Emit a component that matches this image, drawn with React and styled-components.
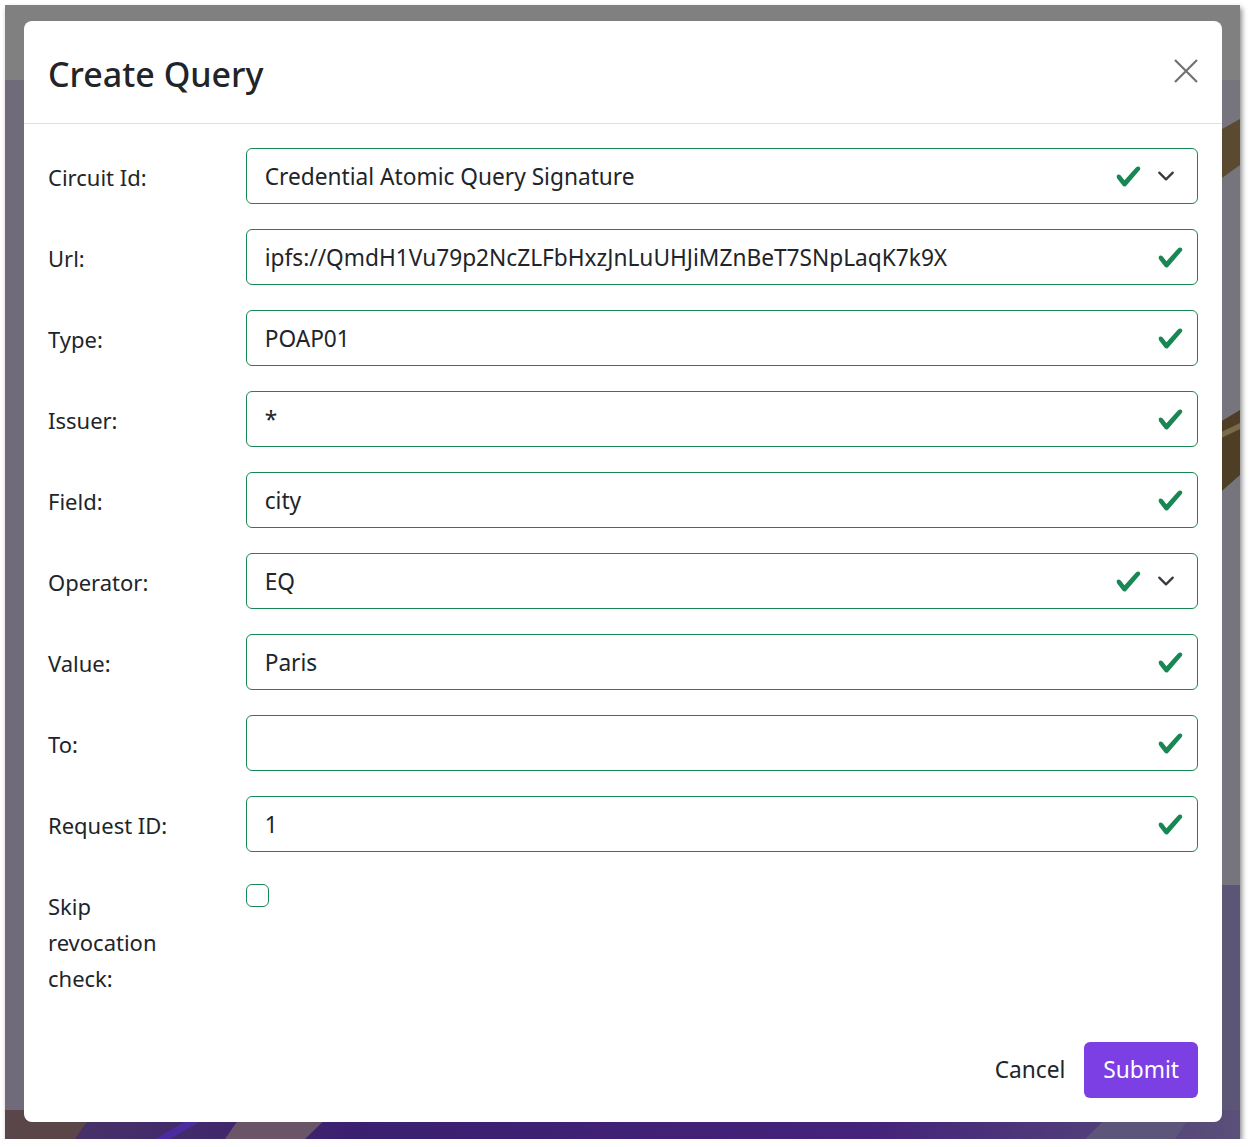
import React from 'react';
import styled, { createGlobalStyle } from 'styled-components';

const Global = createGlobalStyle`
  html, body { margin: 0; padding: 0; background: #fff; }
  body { font-family: "Noto Sans", "Open Sans", sans-serif; color: #212529; }
  *, *::before, *::after { box-sizing: border-box; }
`;

const Frame = styled.div`
  position: relative;
  margin: 5px 0 0 5px;
  width: 1235px;
  height: 1134px;
  box-shadow: 2px 3px 5px rgba(0, 0, 0, 0.45);
  overflow: hidden;
  padding: 16px 0 0 19px;
`;

const Backdrop = styled.svg`
  position: absolute;
  inset: 0;
  width: 100%;
  height: 100%;
  z-index: 0;
`;

const Modal = styled.div`
  position: relative;
  z-index: 1;
  width: 1198px;
  height: 1101px;
  background: #fff;
  border-radius: 8px;
  display: flex;
  flex-direction: column;
`;

const Header = styled.div`
  height: 103px;
  flex: none;
  border-bottom: 1px solid #dee2e6;
  display: flex;
  align-items: center;
  justify-content: space-between;
  padding: 4px 24px 0;
`;

const Title = styled.h5`
  margin: 0;
  font-size: 34px;
  font-weight: 500;
  line-height: 1.5;
  color: #212529;
`;

const CloseButton = styled.button`
  border: 0;
  background: transparent;
  padding: 0;
  margin-top: -6px;
  width: 24px;
  height: 24px;
  display: flex;
  opacity: 0.55;
  cursor: pointer;
`;

const Body = styled.div`
  flex: none;
  padding: 24px 24px 22px;
`;

const Row = styled.div`
  display: grid;
  grid-template-columns: 161.67px 952.33px;
  column-gap: 36px;
  margin-bottom: ${p => (p.$last ? '0' : '25px')};
`;

const Label = styled.label`
  font-size: 22px;
  line-height: 36px;
  padding-top: 11px;
  color: #212529;
  max-width: ${p => (p.$narrow ? '125px' : 'none')};
`;

const Field = styled.div`
  height: 56px;
  border: 1px solid #198754;
  border-radius: 6px;
  display: flex;
  align-items: center;
  padding: 0 ${p => (p.$select ? '19px' : '13px')} 0 18px;
  font-size: 22.7px;
  color: #212529;
`;

const Value = styled.span`
  flex: 1;
  white-space: nowrap;
  overflow: hidden;
`;

const Check = styled.svg`
  width: 27px;
  height: 27px;
  flex: none;
`;

const Chevron = styled.svg`
  width: 24px;
  height: 18px;
  margin-left: 12px;
  flex: none;
`;

const CheckBox = styled.span`
  display: block;
  width: 23px;
  height: 23px;
  margin-top: 7px;
  border: 1.5px solid #198754;
  border-radius: 6px;
  background: #fff;
`;

const Footer = styled.div`
  flex: none;
  margin-top: auto;
  padding: 24px;
  display: flex;
  justify-content: flex-end;
  align-items: center;
`;

const CancelButton = styled.button`
  border: 0;
  background: transparent;
  font-family: inherit;
  font-size: 22.7px;
  line-height: 36px;
  color: #212529;
  padding: 0 19px;
  height: 56px;
`;

const SubmitButton = styled.button`
  border: 0;
  background: #7b3fe4;
  color: #fff;
  font-family: inherit;
  font-size: 22.7px;
  line-height: 36px;
  height: 56px;
  padding: 0 19px;
  border-radius: 6px;
`;

const CheckIcon = () => (
  <Check viewBox="0 0 8 8">
    <path
      fill="#198754"
      d="M2.3 6.73.6 4.53c-.4-1.04.46-1.4 1.1-.8l1.1 1.4 3.4-3.8c.6-.63 1.6-.27 1.2.7l-4 4.6c-.43.5-.8.4-1.1.1z"
    />
  </Check>
);

const ChevronIcon = () => (
  <Chevron viewBox="0 0 16 16">
    <path fill="none" stroke="#343a40" strokeLinecap="round" strokeLinejoin="round" strokeWidth="2" d="m2 5 6 6 6-6" />
  </Chevron>
);

const fields = [
  { label: 'Circuit Id:', value: 'Credential Atomic Query Signature', select: true },
  { label: 'Url:', value: 'ipfs://QmdH1Vu79p2NcZLFbHxzJnLuUHJiMZnBeT7SNpLaqK7k9X' },
  { label: 'Type:', value: 'POAP01' },
  { label: 'Issuer:', value: '*' },
  { label: 'Field:', value: 'city' },
  { label: 'Operator:', value: 'EQ', select: true },
  { label: 'Value:', value: 'Paris' },
  { label: 'To:', value: '' },
  { label: 'Request ID:', value: '1' },
];

export default function App() {
  return (
    <>
      <Global />
      <Frame>
        <Backdrop viewBox="0 0 1235 1134" preserveAspectRatio="none">
          <defs>
            <linearGradient id="bottomPurple" x1="0" x2="1" y1="0" y2="0">
              <stop offset="0" stopColor="#4a3566" />
              <stop offset="0.3" stopColor="#3b1f70" />
              <stop offset="0.7" stopColor="#44237a" />
              <stop offset="1" stopColor="#5a5078" />
            </linearGradient>
          </defs>
          <rect x="0" y="0" width="1235" height="1134" fill="#706b7b" />
          <rect x="0" y="0" width="1235" height="75" fill="#808080" />
          <rect x="1210" y="75" width="25" height="820" fill="#76757e" />
          <polygon points="1210,128 1235,114 1235,160 1210,178" fill="#5a4a30" />
          <polygon points="1210,420 1235,405 1235,470 1210,492" fill="#4e3e26" />
          <polygon points="1210,430 1235,418 1235,424 1210,436" fill="#7a6a4a" />
          <rect x="1210" y="880" width="25" height="254" fill="#5c5676" />
          <rect x="0" y="1105" width="1235" height="29" fill="url(#bottomPurple)" />
          <polygon points="0,1105 90,1105 70,1134 0,1134" fill="#5a4548" />
          <polygon points="150,1134 200,1105 215,1105 165,1134" fill="#4a2ca0" />
          <polygon points="240,1105 330,1105 300,1134 220,1134" fill="#6a5468" />
          <polygon points="1080,1134 1110,1105 1190,1105 1170,1134" fill="#5e557a" />
        </Backdrop>
        <Modal>
          <Header>
            <Title>Create Query</Title>
            <CloseButton aria-label="Close">
              <svg width="24" height="24" viewBox="0 0 24 24">
                <path d="M1 1 23 23M23 1 1 23" stroke="#000" strokeWidth="2.2" fill="none" />
              </svg>
            </CloseButton>
          </Header>
          <Body>
            {fields.map(f => (
              <Row key={f.label}>
                <Label>{f.label}</Label>
                <Field $select={f.select}>
                  <Value>{f.value}</Value>
                  <CheckIcon />
                  {f.select && <ChevronIcon />}
                </Field>
              </Row>
            ))}
            <Row $last>
              <Label $narrow>Skip revocation check:</Label>
              <div>
                <CheckBox />
              </div>
            </Row>
          </Body>
          <Footer>
            <CancelButton>Cancel</CancelButton>
            <SubmitButton>Submit</SubmitButton>
          </Footer>
        </Modal>
      </Frame>
    </>
  );
}
